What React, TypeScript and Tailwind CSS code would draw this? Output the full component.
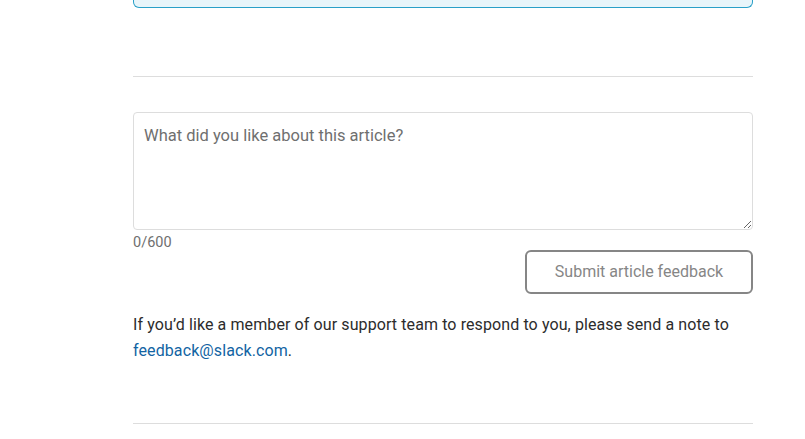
export default function App() {
  return (
    <div className="min-h-screen bg-white font-['Roboto','Liberation_Sans',sans-serif] text-[#1d1c1d]">
      <div className="ml-[133px] w-[620px]">
        <div className="h-[8px] rounded-b-[6px] border-x border-b border-[#2aa0c8] bg-[#e8f5fa]" />

        <div className="mt-[68px] h-px bg-[#dddddd]" />

        <div className="mt-[35px]">
          <textarea
            className="block h-[118px] w-full resize-y rounded-[4px] border border-[#dddddd] px-[10px] py-[12px] text-[16.5px] leading-[22px] text-[#1d1c1d] outline-none placeholder:text-[#6f6f6f]"
            placeholder="What did you like about this article?"
          />
          <div className="mt-[6px] text-[14.5px] leading-[14px] text-[#6f6f6f]">0/600</div>
          <div className="flex justify-end">
            <button className="h-[44px] w-[228px] rounded-[6px] border-2 border-[#868686] bg-white text-[16px] text-[#868686]">
              Submit article feedback
            </button>
          </div>
        </div>

        <p className="mt-[18px] text-[16px] leading-[26px] tracking-[0.1px] text-[#2c2c2c]">
          If you’d like a member of our support team to respond to you, please send a note to{' '}
          <a href="#" className="text-[#1264a3]">feedback@slack.com</a>.
        </p>

        <div className="mt-[59px] h-px bg-[#dddddd]" />
      </div>
    </div>
  );
}
